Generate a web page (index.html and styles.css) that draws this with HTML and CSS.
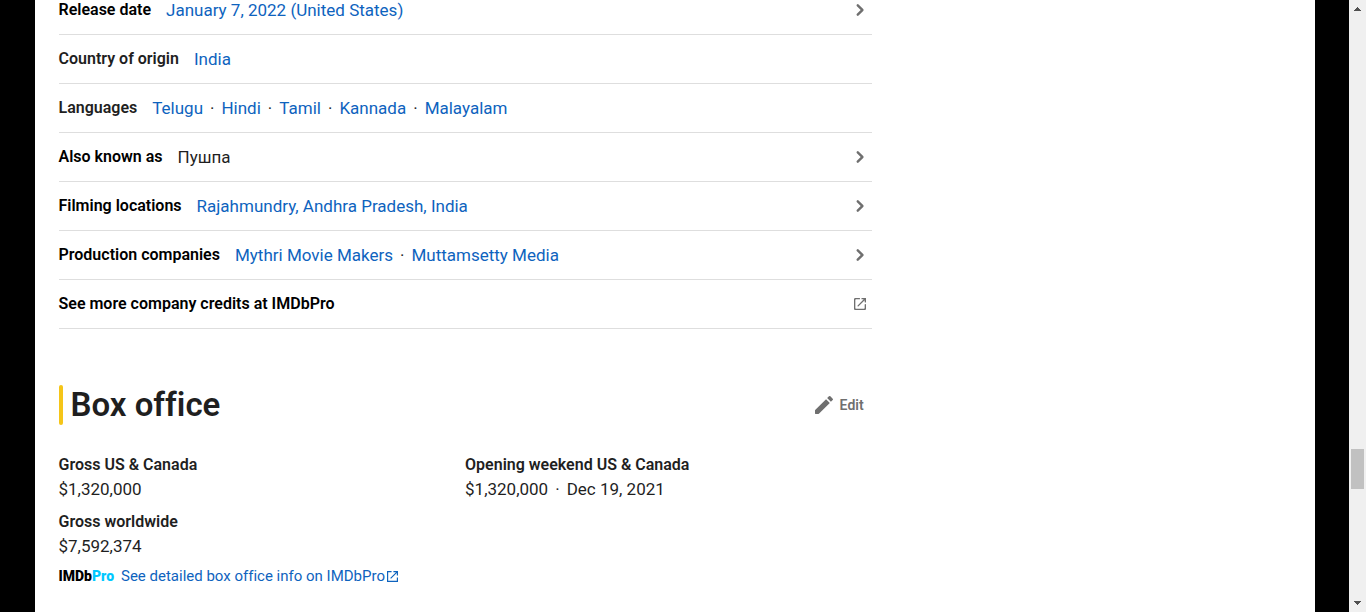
FILE: index.html
```html
<!DOCTYPE html>
<html lang="en">
<head>
<meta charset="utf-8">
<title>Details and box office</title>
<link rel="stylesheet" href="styles.css">
</head>
<body>
<svg class="sprite" aria-hidden="true">
  <symbol id="chevron" viewBox="0 0 24 24"><path d="M8.9 6.5a1.2 1.2 0 0 0 0 1.7l3.8 3.8-3.8 3.8a1.2 1.2 0 1 0 1.7 1.7l4.6-4.6a1.2 1.2 0 0 0 0-1.8l-4.6-4.6a1.2 1.2 0 0 0-1.7 0z"/></symbol>
  <symbol id="launch" viewBox="0 0 24 24"><path d="M16 16.67H8A.67.67 0 0 1 7.33 16V8c0-.37.3-.67.67-.67h3.33a.67.67 0 1 0 0-1.33h-4C6.6 6 6 6.6 6 7.33v9.34C6 17.4 6.6 18 7.33 18h9.34c.73 0 1.33-.6 1.33-1.33v-4a.67.67 0 1 0-1.33 0V16c0 .37-.3.67-.67.67zM13.33 6.67c0 .36.3.66.67.66h1.73l-6.09 6.09a.66.66 0 1 0 .94.94l6.09-6.09V10A.67.67 0 0 0 18 10V6h-4c-.37 0-.67.3-.67.67z"/></symbol>
  <symbol id="launch-inline" viewBox="0 0 12 12"><path d="M10.7 10.7H1.3V1.3H5V0H0v12h12V7h-1.3zM7 0v1.3h2.8L3.5 7.6l.9.9 6.3-6.3V5H12V0z"/></symbol>
  <symbol id="pencil" viewBox="0 0 24 24"><path d="M3 17.46v3.04c0 .28.22.5.5.5h3.04c.13 0 .26-.05.35-.15L17.81 9.94l-3.75-3.75L3.15 17.1a.5.5 0 0 0-.15.36zM20.71 7.04a1 1 0 0 0 0-1.41l-2.34-2.34a1 1 0 0 0-1.41 0l-1.83 1.83 3.75 3.75 1.83-1.83z"/></symbol>
</svg>
<div class="viewport">
  <div class="page">
    <main class="column">
      <ul class="details">
        <li class="row"><a class="label pressable" href="#release">Release date</a>
          <span class="values"><a href="#us">January 7, 2022 (United States)</a></span>
          <a class="more" href="#release" aria-label="Release date: see all"><svg class="icon"><use href="#chevron"/></svg></a></li>
        <li class="row"><span class="label">Country of origin</span>
          <span class="values"><a href="#india">India</a></span></li>
        <li class="row"><span class="label">Languages</span>
          <span class="values"><a href="#te">Telugu</a><i class="dot">·</i><a href="#hi">Hindi</a><i class="dot">·</i><a href="#ta">Tamil</a><i class="dot">·</i><a href="#kn">Kannada</a><i class="dot">·</i><a href="#ml">Malayalam</a></span></li>
        <li class="row"><a class="label pressable" href="#aka">Also known as</a>
          <span class="values">Пушпа</span>
          <a class="more" href="#aka" aria-label="Also known as: see all"><svg class="icon"><use href="#chevron"/></svg></a></li>
        <li class="row"><a class="label pressable" href="#locations">Filming locations</a>
          <span class="values"><a href="#rajahmundry">Rajahmundry, Andhra Pradesh, India</a></span>
          <a class="more" href="#locations" aria-label="Filming locations: see all"><svg class="icon"><use href="#chevron"/></svg></a></li>
        <li class="row"><a class="label pressable" href="#companies">Production companies</a>
          <span class="values"><a href="#mythri">Mythri Movie Makers</a><i class="dot">·</i><a href="#muttamsetty">Muttamsetty Media</a></span>
          <a class="more" href="#companies" aria-label="Production companies: see all"><svg class="icon"><use href="#chevron"/></svg></a></li>
        <li class="row"><a class="label pressable" href="#pro">See more company credits at IMDbPro</a>
          <a class="more" href="#pro" aria-label="Open IMDbPro"><svg class="icon"><use href="#launch"/></svg></a></li>
      </ul>

      <section>
        <header class="section-head">
          <h2 class="title">Box office</h2>
          <button class="edit" type="button"><svg class="icon"><use href="#pencil"/></svg>Edit</button>
        </header>
        <dl class="figures">
          <div class="figure"><dt>Gross US &amp; Canada</dt><dd>$1,320,000</dd></div>
          <div class="figure"><dt>Opening weekend US &amp; Canada</dt><dd>$1,320,000<i class="dot">·</i>Dec 19, 2021</dd></div>
          <div class="figure"><dt>Gross worldwide</dt><dd>$7,592,374</dd></div>
        </dl>
        <a class="pro" href="#pro-box-office"><span class="logo">IMDb<span class="logo-pro">Pro</span></span><span>See detailed box office info on IMDbPro</span><svg class="pro-icon"><use href="#launch-inline"/></svg></a>
      </section>
    </main>
  </div>
</div>
<div class="scrollbar" aria-hidden="true">
  <svg class="arrow" viewBox="0 0 17 17"><path d="M8 7h1v1h1v1h1v1h1v1H5v-1h1V9h1V8h1z"/></svg>
  <div class="thumb"></div>
  <svg class="arrow" viewBox="0 0 17 17"><path d="M5 6h7v1h-1v1h-1v1H9v1H8V9H7V8H6V7H5z"/></svg>
</div>
</body>
</html>
```
FILE: styles.css
```css
* { box-sizing: border-box; }

body {
  margin: 0;
  height: 100vh;
  display: flex;
  overflow: hidden;
  background: #000;
  color: #1f1f1f;
  font: 16px/24px Roboto, "Liberation Sans", sans-serif;
  font-variant-ligatures: none;
}

a { color: #0e63be; text-decoration: none; }
a:hover { text-decoration: underline; }

.sprite { display: none; }
.icon { width: 24px; height: 24px; fill: #6f6f6f; }

.viewport {
  flex: 1;
  display: flex;
  justify-content: center;
  overflow: hidden;
}

.page {
  width: 100%;
  max-width: 1280px;
  padding: 0 24px;
  background: #fff;
}

.column { width: 66%; }

.details {
  list-style: none;
  margin: -14px 0 56px;
  padding: 0;
}

.row {
  display: flex;
  align-items: center;
  gap: 15px;
  padding: 12px 0;
  border-bottom: 1px solid #dedede;
}

.label { font-weight: 600; }
.pressable { color: #000; }
.values { font-size: 17px; }
.dot { margin: 0 7px; font-style: normal; }

.more { display: flex; margin-left: auto; }

.section-head {
  display: flex;
  align-items: center;
  justify-content: space-between;
  margin-bottom: 28px;
}

.title {
  display: flex;
  align-items: center;
  gap: 8px;
  margin: 0;
  font-size: 33px;
  line-height: 40px;
  font-weight: 600;
}

.title::before {
  content: "";
  width: 4px;
  height: 40px;
  border-radius: 2px;
  background: #f5c518;
}

.edit {
  display: flex;
  align-items: center;
  gap: 4px;
  padding: 0 8px;
  border: 0;
  background: none;
  color: #6f6f6f;
  font: 600 14px/24px Roboto, "Liberation Sans", sans-serif;
}

.figures {
  display: grid;
  grid-template-columns: 1fr 1fr;
  row-gap: 8px;
  margin: 0;
}

.figure dt { font-weight: 600; }
.figure dd { margin: 0; font-size: 17px; line-height: 25px; }

.pro {
  display: flex;
  align-items: center;
  margin-top: 7px;
  font-size: 15px;
  line-height: 20px;
}

.logo {
  margin-right: 7px;
  color: #000;
  font-size: 14px;
  font-weight: 900;
}

.logo-pro { color: #00c8ff; }
.pro-icon { width: 11px; height: 11px; margin-left: 2px; fill: #0e63be; }

.scrollbar {
  position: relative;
  flex: none;
  width: 17px;
  display: flex;
  flex-direction: column;
  justify-content: space-between;
  background: #f0f0f0;
}

.arrow { width: 17px; height: 17px; fill: #505050; }

.thumb {
  position: absolute;
  top: 73.4%;
  left: 2px;
  width: 13px;
  height: 40px;
  background: #c1c1c1;
}
```
